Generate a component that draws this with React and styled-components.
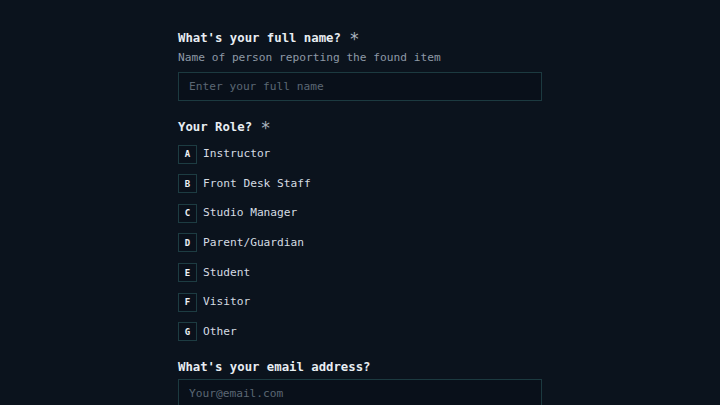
import * as React from "react"
import styled, { createGlobalStyle } from "styled-components"

const roles = [
  ["A", "Instructor"],
  ["B", "Front Desk Staff"],
  ["C", "Studio Manager"],
  ["D", "Parent/Guardian"],
  ["E", "Student"],
  ["F", "Visitor"],
  ["G", "Other"],
]

const App = () => {
  return (
    <>
      <GlobalStyle />
      <Page>
        <Form>
          <Label>
            What's your full name? <Star>*</Star>
          </Label>
          <Hint>Name of person reporting the found item</Hint>
          <Input placeholder="Enter your full name" />

          <Label $top={18}>
            Your Role? <Star>*</Star>
          </Label>
          <Options>
            {roles.map(([key, name]) => (
              <Option key={key}>
                <Key>{key}</Key>
                <OptionText>{name}</OptionText>
              </Option>
            ))}
          </Options>

          <Label $top={18}>What's your email address?</Label>
          <Input $top={4} placeholder="Your@email.com" />
        </Form>
      </Page>
    </>
  )
}

export default App

const GlobalStyle = createGlobalStyle`
  html, body {
    margin: 0;
    padding: 0;
    background: #0b131d;
  }
  body {
    font-family: "DejaVu Sans Mono", "Liberation Mono", monospace;
  }
`

const Page = styled.div`
  width: 720px;
  height: 405px;
  overflow: hidden;
  background: #0b131d;
`

const Form = styled.div`
  width: 364px;
  margin: 0 auto;
  padding-top: 30px;
  display: flex;
  flex-direction: column;
`

const Label = styled.div`
  margin-top: ${(p) => p.$top || 0}px;
  height: 16px;
  font-size: 12.3px;
  line-height: 16px;
  font-weight: bold;
  color: #e8edf2;
  white-space: pre;
`

const Star = styled.span`
  font-size: 17px;
  line-height: 0;
  font-weight: normal;
  color: #a9b3bf;
  vertical-align: -3px;
  margin-left: 1px;
`

const Hint = styled.div`
  margin-top: 5px;
  font-size: 11.2px;
  line-height: 14px;
  color: #8e99a6;
`

const Input = styled.input`
  margin-top: ${(p) => p.$top || 7}px;
  box-sizing: border-box;
  width: 364px;
  height: 29px;
  padding: 0 10px;
  background: #09101a;
  border: 1px solid #1c3a40;
  outline: none;
  font-family: "DejaVu Sans Mono", "Liberation Mono", monospace;
  font-size: 11.2px;
  color: #d0d7de;

  &::placeholder {
    color: #5b6774;
  }
`

const Options = styled.div`
  margin-top: 10px;
  display: flex;
  flex-direction: column;
  gap: 11.67px;
`

const Option = styled.div`
  display: flex;
  align-items: center;
  gap: 6px;
  height: 18px;
`

const Key = styled.div`
  box-sizing: border-box;
  width: 19px;
  height: 19px;
  display: flex;
  align-items: center;
  justify-content: center;
  border: 1px solid #1d3c42;
  background: #0a111b;
  color: #eef2f6;
  font-size: 9px;
  font-weight: bold;
`

const OptionText = styled.span`
  font-size: 11.2px;
  line-height: 14px;
  color: #d5dce3;
`
